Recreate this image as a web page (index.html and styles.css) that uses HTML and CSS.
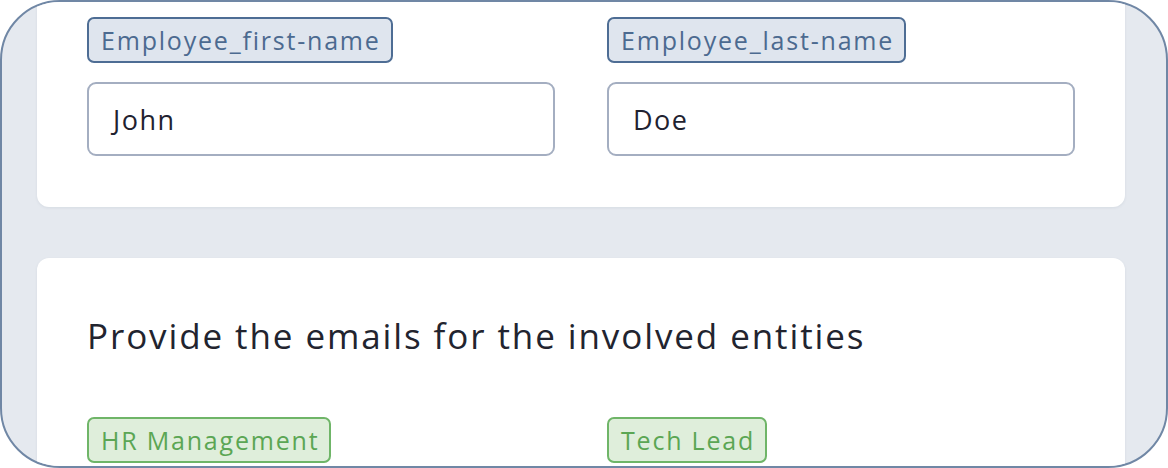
FILE: index.html
```html
<!DOCTYPE html>
<html>
<head>
<meta charset="utf-8">
<link rel="stylesheet" href="styles.css">
</head>
<body>
<div class="frame">
  <section class="card card-top">
    <div class="fields">
      <div class="field">
        <span class="tag tag-blue">Employee_first-name</span>
        <div class="input">John</div>
      </div>
      <div class="field">
        <span class="tag tag-blue">Employee_last-name</span>
        <div class="input">Doe</div>
      </div>
    </div>
  </section>
  <section class="card card-bottom">
    <h2 class="heading">Provide the emails for the involved entities</h2>
    <div class="fields">
      <div class="field">
        <span class="tag tag-green">HR Management</span>
      </div>
      <div class="field">
        <span class="tag tag-green">Tech Lead</span>
      </div>
    </div>
  </section>
</div>
</body>
</html>
```
FILE: styles.css
```css
* { box-sizing: border-box; }
html, body { margin: 0; padding: 0; background: #ffffff; }
body { font-family: "Open Sans", "Noto Sans", sans-serif; }

.frame {
  width: 1168px;
  height: 468px;
  border: 2px solid #7087a5;
  border-radius: 60px;
  background: #e5e9ef;
  overflow: hidden;
  padding: 0 41px 0 35px;
  display: flex;
  flex-direction: column;
  gap: 51px;
}

.card {
  background: #ffffff;
  border-radius: 12px;
  padding: 0 50px;
  box-shadow: 0 1px 3px rgba(40, 60, 90, 0.08);
  flex-shrink: 0;
}

.card-top {
  margin-top: -20px;
  padding-top: 35px;
  padding-bottom: 51px;
}

.card-bottom {
  padding-top: 54px;
  height: 260px;
}

.fields {
  display: grid;
  grid-template-columns: 468px 468px;
  column-gap: 52px;
}

.field {
  display: flex;
  flex-direction: column;
  align-items: flex-start;
  gap: 19px;
}

.tag {
  display: inline-flex;
  align-items: center;
  height: 46px;
  padding: 0 10px 0 12px;
  border: 2px solid;
  border-radius: 7px;
  font-size: 25px;
  letter-spacing: 1.8px;
}

.tag-blue {
  background: #dfe5ee;
  border-color: #4e6d94;
  color: #4c6a90;
}

.tag-green {
  background: #dfeedb;
  border-color: #6fb568;
  color: #5ba654;
}

.input {
  width: 100%;
  height: 74px;
  border: 2px solid #a4aec1;
  border-radius: 9px;
  display: flex;
  align-items: center;
  padding: 0 24px;
  font-size: 27px;
  font-weight: 500;
  letter-spacing: 1.5px;
  color: #1f2230;
}

.heading {
  margin: 0 0 57px 0;
  font-size: 35px;
  font-weight: 500;
  letter-spacing: 1.9px;
  color: #22242f;
  line-height: 48px;
}
```
